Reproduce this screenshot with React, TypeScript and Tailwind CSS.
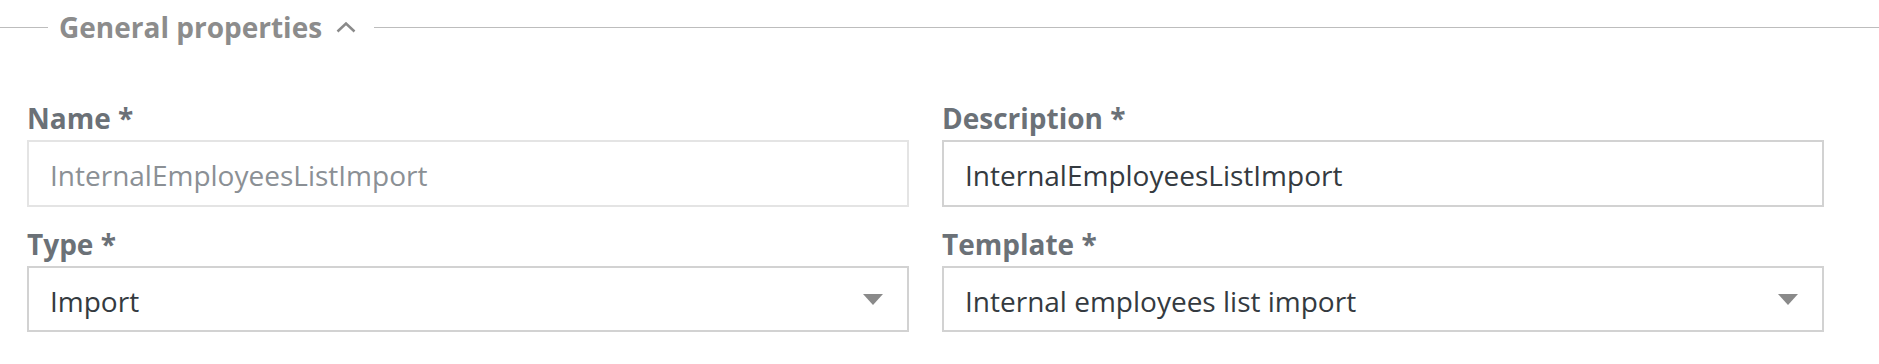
import React from 'react';

const Caret = () => (
    <svg width="20" height="11" viewBox="0 0 20 11" className="shrink-0">
        <path d="M0 0 L20 0 L10 11 Z" fill="#8a8a8a" />
    </svg>
);

const Field = ({ label, children }: { label: string; children: React.ReactNode }) => (
    <div className="flex flex-col">
        <label className="text-[28px] leading-[36px] font-bold text-[#6b7177] mb-[4px]">{label}</label>
        {children}
    </div>
);

const TextBox = ({ value, disabled }: { value: string; disabled?: boolean }) => (
    <div className={`h-[67px] flex items-center px-[21px] pt-[3px] border-2 bg-white
        ${disabled ? 'border-[#e4e4e4] text-[#8b9095]' : 'border-[#d2d2d2] text-[#343a40]'}`}>
        <span className="text-[28px]">{value}</span>
    </div>
);

const SelectBox = ({ value }: { value: string }) => (
    <div className="h-[66px] flex items-center justify-between pl-[21px] pr-[24px] border-2 border-[#d2d2d2] bg-white text-[#343a40]">
        <span className="text-[28px] pt-[3px]">{value}</span>
        <Caret />
    </div>
);

export default function App() {
    return (
        <div className="w-[1879px] h-[364px] bg-white" style={{ fontFamily: '"Open Sans", "Liberation Sans", sans-serif' }}>
            {/* section header */}
            <div className="flex items-center h-[54px]">
                <div className="w-[48px] h-px bg-[#bdbdbd]" />
                <span className="ml-[11px] text-[28px] font-bold text-[#8c8c8c]">General properties</span>
                <svg width="20" height="11" viewBox="0 0 20 11" className="ml-[14px] mr-[18px] shrink-0">
                    <path d="M1.5 9.5 L10 1.5 L18.5 9.5" fill="none" stroke="#8a8a8a" strokeWidth="2.5" />
                </svg>
                <div className="flex-1 h-px bg-[#bdbdbd]" />
            </div>

            <div className="grid grid-cols-2 gap-x-[33px] gap-y-[19px] pl-[27px] pr-[55px] pt-[46px]">
                <Field label="Name *">
                    <TextBox value="InternalEmployeesListImport" disabled />
                </Field>
                <Field label="Description *">
                    <TextBox value="InternalEmployeesListImport" />
                </Field>
                <Field label="Type *">
                    <SelectBox value="Import" />
                </Field>
                <Field label="Template *">
                    <SelectBox value="Internal employees list import" />
                </Field>
            </div>
        </div>
    );
}
